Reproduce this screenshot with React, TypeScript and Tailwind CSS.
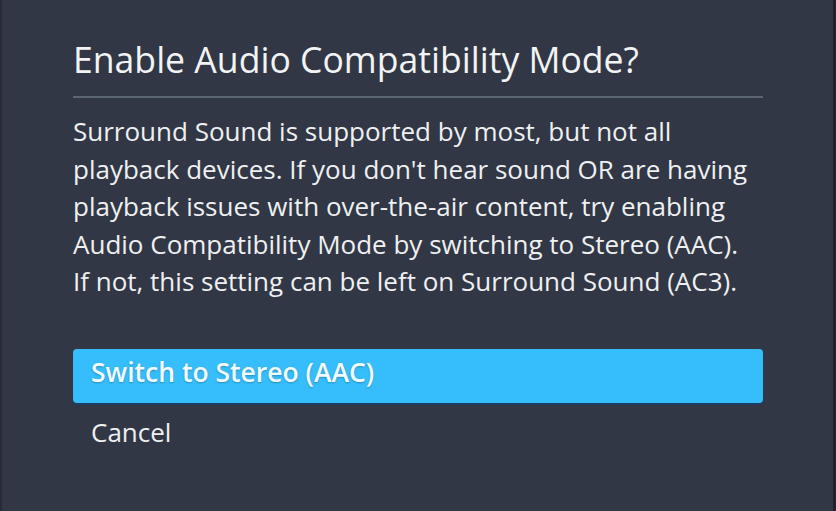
export default function App() {
  return (
    <div className="w-[836px] h-[511px] bg-[#313744] flex overflow-hidden" style={{ fontFamily: '"Open Sans", sans-serif' }}>
      <div className="w-[2px] bg-[#262b35]" />
      <div className="flex-1 flex flex-col pl-[71px] pr-[70px] pt-[36px]">
        <h1 className="text-[35.6px] leading-[46px] text-[#f1f3f5]">Enable Audio Compatibility Mode?</h1>
        <div className="mt-[14px] h-[2px] bg-[#5c6574]" />
        <p className="mt-[15px] text-[26px] leading-[37.5px] text-[#eef0f2]">
          Surround Sound is supported by most, but not all
          <br />
          playback devices. If you don't hear sound OR are having
          <br />
          playback issues with over-the-air content, try enabling
          <br />
          Audio Compatibility Mode by switching to Stereo (AAC).
          <br />
          If not, this setting can be left on Surround Sound (AC3).
        </p>
        <button className="mt-[48px] h-[54px] flex items-center pb-[5px] rounded-[4px] bg-[#36befc] text-left pl-[18px] text-[26.5px] font-semibold text-[#f4fbff] shadow-[0_2px_0_#1c3c66] [text-shadow:0_1px_2px_rgba(0,0,0,0.25)]">
          Switch to Stereo (AAC)
        </button>
        <div className="mt-[11px] pl-[18px] text-[26px] leading-[36px] text-[#eef0f2]">Cancel</div>
      </div>
      <div className="w-[3px] bg-[#1f232b]" />
    </div>
  );
}
